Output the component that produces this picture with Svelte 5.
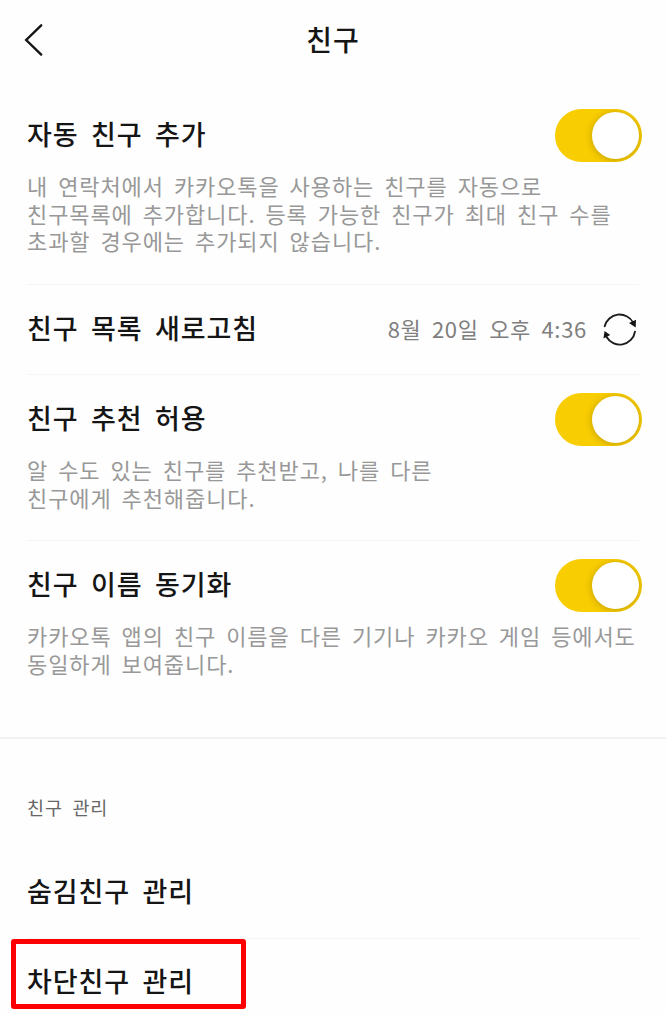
<script>
  const hidden = '숨김친구 관리';
  const blocked = '차단친구 관리';
</script>

{#snippet toggle()}
  <button class="toggle" role="switch" aria-checked="true"><span class="knob"></span></button>
{/snippet}

<main>
  <header>
    <svg class="back" width="20" height="34" viewBox="0 0 20 34"><path d="M17.2 2.3 2.2 17 17.2 31.6" /></svg>
    <h1>친구</h1>
  </header>

  <section class="first">
    <div class="head"><h2>자동 친구 추가</h2>{@render toggle()}</div>
    <p>
      <span>내 연락처에서 카카오톡을 사용하는 친구를 자동으로</span>
      <span>친구목록에 추가합니다. 등록 가능한 친구가 최대 친구 수를</span>
      <span>초과할 경우에는 추가되지 않습니다.</span>
    </p>
  </section>

  <section class="refresh">
    <h2>친구 목록 새로고침</h2>
    <span class="time">8월 20일 오후 4:36</span>
    <svg width="36" height="36" viewBox="0 0 36 36">
      <path class="arc" d="M1.7 14.3A15.4 15.4 0 0 1 30.2 10.6M32 19.6A15.4 15.4 0 0 1 3.4 24.8" />
      <path class="tip" d="M33 7.7 32.7 15.5 26 11.1ZM1.6 19 .4 26.6 7.2 23Z" />
    </svg>
  </section>

  <section class="suggest">
    <div class="head"><h2>친구 추천 허용</h2>{@render toggle()}</div>
    <p>
      <span>알 수도 있는 친구를 추천받고, 나를 다른</span>
      <span>친구에게 추천해줍니다.</span>
    </p>
  </section>

  <section class="sync">
    <div class="head"><h2>친구 이름 동기화</h2>{@render toggle()}</div>
    <p>
      <span>카카오톡 앱의 친구 이름을 다른 기기나 카카오 게임 등에서도</span>
      <span>동일하게 보여줍니다.</span>
    </p>
  </section>

  <div class="manage">
    <h3>친구 관리</h3>
    <div class="item"><h2>{hidden}</h2></div>
    <div class="item marked"><h2>{blocked}</h2></div>
  </div>
</main>

<style>
  :global(body) { background: #fefefe; overflow: hidden; }
  main {
    width: 666px;
    height: 1015px;
    overflow: hidden;
    box-sizing: border-box;
    background: #fefefe;
    color: #151515;
    font-family: "Noto Sans CJK KR", sans-serif;
  }
  h1, h2, h3, p { margin: 0; font-weight: 400; white-space: nowrap; }
  header {
    height: 80px;
    display: grid;
    grid-template-columns: 60px 1fr 60px;
    align-items: center;
  }
  .back { margin-left: 24px; fill: none; stroke: #151515; stroke-width: 2.4; stroke-linecap: round; }
  h1, h2 { font-size: 27px; line-height: 40px; font-weight: 500; letter-spacing: 0.9px; word-spacing: 5.6px; }
  h1 { text-align: center; font-size: 28px; padding-bottom: 2px; }
  h2 { padding-bottom: 4px; }
  section { margin: 0 27px; box-sizing: border-box; border-bottom: 1px solid #f5f5f5; }
  .first { height: 205px; padding-top: 29px; }
  .suggest { height: 166px; padding-top: 18px; }
  .sync { height: 196px; padding-top: 18px; border: 0; }
  .head { display: flex; justify-content: space-between; align-items: center; height: 53px; margin-right: -3px; }
  .toggle {
    display: flex;
    justify-content: flex-end;
    align-items: center;
    width: 87px;
    height: 53px;
    padding: 0 3px;
    border: 0;
    border-radius: 27px;
    background: #f8cd02;
    overflow: hidden;
  }
  .knob { width: 47px; height: 47px; border-radius: 50%; background: #fff; box-shadow: 0 1px 7px rgba(110, 85, 0, 0.4); }
  p { margin-top: 10px; color: #989898; font-size: 22px; line-height: 27.6px; letter-spacing: 0.9px; word-spacing: 4.2px; }
  p span { display: block; }
  .refresh { height: 90px; display: flex; align-items: center; }
  .refresh svg { margin-left: 16px; }
  .time { margin-left: auto; padding-bottom: 3px; color: #7f7f7f; font-size: 22px; letter-spacing: 0.7px; word-spacing: 4.8px; white-space: nowrap; }
  .arc { fill: none; stroke: #1c1c1c; stroke-width: 1.9; stroke-linecap: round; }
  .tip { fill: #151515; }
  .manage { border-top: 2px solid #f1f1f1; padding-top: 54px; }
  h3 { margin-left: 27px; color: #666; font-size: 18.5px; line-height: 28px; letter-spacing: 0.9px; word-spacing: 4.5px; }
  .item { height: 91px; margin: 27px 27px 0; box-sizing: border-box; display: flex; align-items: center; border-bottom: 1px solid #f5f5f5; }
  .item.marked {
    width: 235px;
    height: 70px;
    margin: 0 0 0 11px;
    padding: 17px 0 0 11px;
    border: 5px solid #fe0000;
    border-radius: 3px;
  }
</style>
